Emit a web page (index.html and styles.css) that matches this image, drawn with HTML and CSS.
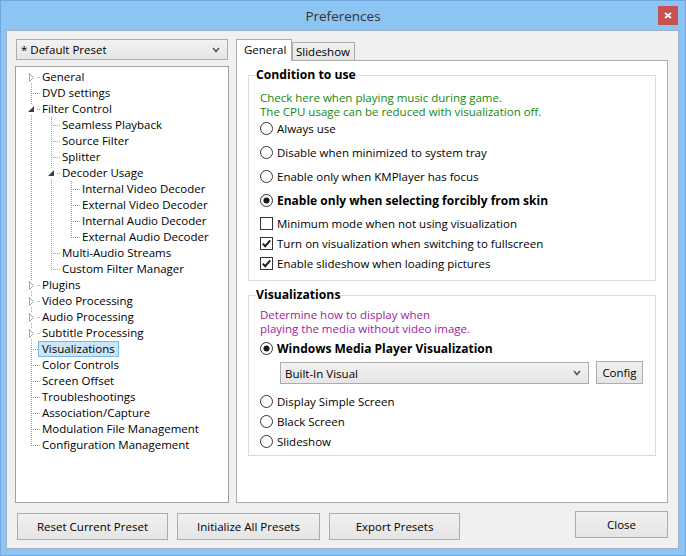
FILE: index.html
```html
<!DOCTYPE html>
<html>
<head>
<meta charset="utf-8">
<title>Preferences</title>
<link rel="stylesheet" href="styles.css">
</head>
<body>
<div class="window">
  <div class="titlebar">
    <span class="title">Preferences</span>
    <div class="close"><svg width="8" height="7" viewBox="0 0 8 7"><path d="M1 1 L7 6 M7 1 L1 6" stroke="#fff" stroke-width="1.7"/></svg></div>
  </div>
  <div class="client">
    <div class="main">
      <div class="left">
        <div class="combo preset"><span>* Default Preset</span><svg class="chev" width="8" height="6" viewBox="0 0 8 6"><polyline points="1,1 4,4.5 7,1" fill="none" stroke="#555" stroke-width="1.6"/></svg></div>
        <div class="tree">
          <div class="row"><span class="g f"><svg width="20" height="16" viewBox="0 0 20 16"><rect x="6" y="3" width="9" height="10" fill="#fff"/><polygon points="8.5,4.5 12.5,8.5 8.5,12.5" fill="#fff" stroke="#a6a6a6"/></svg></span><span class="lbl">General</span></div>
          <div class="row"><span class="g t"></span><span class="lbl">DVD settings</span></div>
          <div class="row"><span class="g t"><svg width="20" height="16" viewBox="0 0 20 16"><rect x="6" y="3" width="9" height="10" fill="#fff"/><polygon points="13,5 13,11 7,11" fill="#404040"/></svg></span><span class="lbl">Filter Control</span></div>
          <div class="row"><span class="g v"></span><span class="g t"></span><span class="lbl">Seamless Playback</span></div>
          <div class="row"><span class="g v"></span><span class="g t"></span><span class="lbl">Source Filter</span></div>
          <div class="row"><span class="g v"></span><span class="g t"></span><span class="lbl">Splitter</span></div>
          <div class="row"><span class="g v"></span><span class="g t"><svg width="20" height="16" viewBox="0 0 20 16"><rect x="6" y="3" width="9" height="10" fill="#fff"/><polygon points="13,5 13,11 7,11" fill="#404040"/></svg></span><span class="lbl">Decoder Usage</span></div>
          <div class="row"><span class="g v"></span><span class="g v"></span><span class="g t"></span><span class="lbl">Internal Video Decoder</span></div>
          <div class="row"><span class="g v"></span><span class="g v"></span><span class="g t"></span><span class="lbl">External Video Decoder</span></div>
          <div class="row"><span class="g v"></span><span class="g v"></span><span class="g t"></span><span class="lbl">Internal Audio Decoder</span></div>
          <div class="row"><span class="g v"></span><span class="g v"></span><span class="g l"></span><span class="lbl">External Audio Decoder</span></div>
          <div class="row"><span class="g v"></span><span class="g t"></span><span class="lbl">Multi-Audio Streams</span></div>
          <div class="row"><span class="g v"></span><span class="g l"></span><span class="lbl">Custom Filter Manager</span></div>
          <div class="row"><span class="g t"><svg width="20" height="16" viewBox="0 0 20 16"><rect x="6" y="3" width="9" height="10" fill="#fff"/><polygon points="8.5,4.5 12.5,8.5 8.5,12.5" fill="#fff" stroke="#a6a6a6"/></svg></span><span class="lbl">Plugins</span></div>
          <div class="row"><span class="g t"><svg width="20" height="16" viewBox="0 0 20 16"><rect x="6" y="3" width="9" height="10" fill="#fff"/><polygon points="8.5,4.5 12.5,8.5 8.5,12.5" fill="#fff" stroke="#a6a6a6"/></svg></span><span class="lbl">Video Processing</span></div>
          <div class="row"><span class="g t"><svg width="20" height="16" viewBox="0 0 20 16"><rect x="6" y="3" width="9" height="10" fill="#fff"/><polygon points="8.5,4.5 12.5,8.5 8.5,12.5" fill="#fff" stroke="#a6a6a6"/></svg></span><span class="lbl">Audio Processing</span></div>
          <div class="row"><span class="g t"><svg width="20" height="16" viewBox="0 0 20 16"><rect x="6" y="3" width="9" height="10" fill="#fff"/><polygon points="8.5,4.5 12.5,8.5 8.5,12.5" fill="#fff" stroke="#a6a6a6"/></svg></span><span class="lbl">Subtitle Processing</span></div>
          <div class="row"><span class="g t"></span><span class="lbl sel">Visualizations</span></div>
          <div class="row"><span class="g t"></span><span class="lbl">Color Controls</span></div>
          <div class="row"><span class="g t"></span><span class="lbl">Screen Offset</span></div>
          <div class="row"><span class="g t"></span><span class="lbl">Troubleshootings</span></div>
          <div class="row"><span class="g t"></span><span class="lbl">Association/Capture</span></div>
          <div class="row"><span class="g t"></span><span class="lbl">Modulation File Management</span></div>
          <div class="row"><span class="g l"></span><span class="lbl">Configuration Management</span></div>
        </div>
      </div>
      <div class="right">
        <div class="tabs">
          <div class="tab sel">General</div>
          <div class="tab">Slideshow</div>
        </div>
        <div class="panel">
          <fieldset class="grp g1">
            <legend>Condition to use</legend>
            <div class="note green">Check here when playing music during game.<br>The CPU usage can be reduced with visualization off.</div>
            <div class="opts">
              <div class="opt r24"><svg class="rb" width="13" height="13" viewBox="0 0 13 13"><circle cx="6.5" cy="6.5" r="6" fill="#fff" stroke="#333"/></svg><span>Always use</span></div>
              <div class="opt r24"><svg class="rb" width="13" height="13" viewBox="0 0 13 13"><circle cx="6.5" cy="6.5" r="6" fill="#fff" stroke="#333"/></svg><span>Disable when minimized to system tray</span></div>
              <div class="opt r24"><svg class="rb" width="13" height="13" viewBox="0 0 13 13"><circle cx="6.5" cy="6.5" r="6" fill="#fff" stroke="#333"/></svg><span>Enable only when KMPlayer has focus</span></div>
              <div class="opt r24"><svg class="rb" width="13" height="13" viewBox="0 0 13 13"><circle cx="6.5" cy="6.5" r="6" fill="#fff" stroke="#333"/><circle cx="6.5" cy="6.5" r="3" fill="#1a1a1a"/></svg><span class="b">Enable only when selecting forcibly from skin</span></div>
            </div>
            <div class="checks">
              <div class="opt r20"><svg class="cb" width="13" height="13" viewBox="0 0 13 13"><rect x="0.5" y="0.5" width="12" height="12" fill="#fff" stroke="#333"/></svg><span>Minimum mode when not using visualization</span></div>
              <div class="opt r20"><svg class="cb" width="13" height="13" viewBox="0 0 13 13"><rect x="0.5" y="0.5" width="12" height="12" fill="#fff" stroke="#333"/><path d="M2.8 6.6 L5.2 9.2 L10.2 3.4" fill="none" stroke="#1a1a1a" stroke-width="1.9"/></svg><span>Turn on visualization when switching to fullscreen</span></div>
              <div class="opt r20"><svg class="cb" width="13" height="13" viewBox="0 0 13 13"><rect x="0.5" y="0.5" width="12" height="12" fill="#fff" stroke="#333"/><path d="M2.8 6.6 L5.2 9.2 L10.2 3.4" fill="none" stroke="#1a1a1a" stroke-width="1.9"/></svg><span>Enable slideshow when loading pictures</span></div>
            </div>
          </fieldset>
          <fieldset class="grp g2">
            <legend>Visualizations</legend>
            <div class="note purple">Determine how to display when<br>playing the media without video image.</div>
            <div class="opt r20 wmp"><svg class="rb" width="13" height="13" viewBox="0 0 13 13"><circle cx="6.5" cy="6.5" r="6" fill="#fff" stroke="#333"/><circle cx="6.5" cy="6.5" r="3" fill="#1a1a1a"/></svg><span class="b">Windows Media Player Visualization</span></div>
            <div class="visrow">
              <div class="combo vis"><span>Built-In Visual</span><svg class="chev" width="8" height="6" viewBox="0 0 8 6"><polyline points="1,1 4,4.5 7,1" fill="none" stroke="#555" stroke-width="1.6"/></svg></div>
              <div class="btn config">Config</div>
            </div>
            <div class="visopts">
              <div class="opt r20"><svg class="rb" width="13" height="13" viewBox="0 0 13 13"><circle cx="6.5" cy="6.5" r="6" fill="#fff" stroke="#333"/></svg><span>Display Simple Screen</span></div>
              <div class="opt r20"><svg class="rb" width="13" height="13" viewBox="0 0 13 13"><circle cx="6.5" cy="6.5" r="6" fill="#fff" stroke="#333"/></svg><span>Black Screen</span></div>
              <div class="opt r20"><svg class="rb" width="13" height="13" viewBox="0 0 13 13"><circle cx="6.5" cy="6.5" r="6" fill="#fff" stroke="#333"/></svg><span>Slideshow</span></div>
            </div>
          </fieldset>
        </div>
      </div>
    </div>
    <div class="buttons">
      <div class="btn reset">Reset Current Preset</div>
      <div class="btn init">Initialize All Presets</div>
      <div class="btn export">Export Presets</div>
      <div class="btn closebtn">Close</div>
    </div>
  </div>
</div>
</body>
</html>
```
FILE: styles.css
```css
* { box-sizing: border-box; }
html, body { margin: 0; padding: 0; }
body {
  font-family: "Open Sans", "Noto Sans", sans-serif;
  font-size: 11.5px;
  color: #000;
  background: #8cc4f4;
  --vd: repeating-linear-gradient(to bottom, #a0a0a0 0 1px, transparent 1px 2px);
  --hd: repeating-linear-gradient(to right, #a0a0a0 0 1px, transparent 1px 2px);
}
.window {
  width: 686px;
  height: 556px;
  border: 1px solid #6ea8dc;
  background: #8cc4f4;
  display: flex;
  flex-direction: column;
}
.titlebar {
  height: 29px;
  flex: none;
  position: relative;
  display: flex;
  align-items: center;
  justify-content: center;
}
.title {
  font-size: 13.5px;
  color: #333;
  line-height: 18px;
  margin-top: 1px;
}
.close {
  position: absolute;
  right: 7px;
  top: 5px;
  width: 20px;
  height: 19px;
  background: #c75050;
  display: flex;
  align-items: center;
  justify-content: center;
}
.close svg { display: block; }
.client {
  flex: 1;
  margin: 0 6px 6px 5px;
  background: #f0f0f0;
  border: 1px solid #9fb3c8;
  padding: 8px 10px 0 8px;
  display: flex;
  flex-direction: column;
}
.main {
  display: flex;
  gap: 7px;
  height: 464px;
  flex: none;
}
.left {
  width: 214px;
  display: flex;
  flex-direction: column;
}
.combo {
  display: flex;
  align-items: center;
  justify-content: space-between;
  border: 1px solid #acacac;
  background: linear-gradient(#f2f2f2, #e5e5e5);
  padding: 0 7px 0 4px;
}
.chev { display: block; }
.preset {
  height: 21px;
  margin: 0 1px;
  flex: none;
}
.tree {
  flex: 1;
  margin-top: 6px;
  background: #fff;
  border: 1px solid #a0a0a0;
  padding: 2px 0 0 5px;
}
.row {
  display: flex;
  height: 16px;
  align-items: center;
}
.g {
  width: 20px;
  height: 16px;
  flex: none;
  background-repeat: no-repeat;
}
.g svg { display: block; }
.g.v {
  background-image: var(--vd);
  background-size: 1px 16px;
  background-position: 10px 0;
}
.g.t {
  background-image: var(--vd), var(--hd);
  background-size: 1px 16px, 10px 1px;
  background-position: 10px 0, 10px 8px;
}
.g.l {
  background-image: var(--vd), var(--hd);
  background-size: 1px 9px, 10px 1px;
  background-position: 10px 0, 10px 8px;
}
.g.f {
  background-image: var(--vd), var(--hd);
  background-size: 1px 8px, 10px 1px;
  background-position: 10px 8px, 10px 8px;
}
.lbl {
  margin-left: -3px;
  padding: 0 3px;
  border: 1px solid transparent;
  line-height: 14px;
  white-space: nowrap;
}
.lbl.sel {
  background: #cde6f7;
  border-color: #7db7e8;
}
.right {
  width: 432px;
  display: flex;
  flex-direction: column;
}
.tabs {
  display: flex;
  align-items: flex-end;
  height: 21px;
  flex: none;
  position: relative;
  z-index: 1;
}
.tab {
  height: 18px;
  width: 63px;
  border: 1px solid #acacac;
  border-bottom: none;
  background: linear-gradient(#f0f0f0, #e6e6e6);
  padding-left: 3px;
  line-height: 17px;
}
.tab.sel {
  height: 22px;
  width: 56px;
  margin-bottom: -1px;
  background: #fff;
  padding-left: 7px;
  line-height: 20px;
}
.panel {
  flex: 1;
  background: #fff;
  border: 1px solid #acacac;
  padding: 6px 11px 0 11px;
}
.grp {
  margin: 0;
  border: 1px solid #dcdcdc;
  padding: 0 10px 6px 11px;
  min-width: 0;
}
.g1 { padding-bottom: 7px; }
.grp legend {
  padding: 0;
  margin-left: -4px;
  font-weight: bold;
  font-size: 12.2px;
  line-height: 16px;
}
.g2 {
  margin-top: 6px;
  padding-bottom: 4px;
}
.note {
  line-height: 14px;
  margin-top: 8px;
}
.green { color: #118a11; }
.purple { color: #9c1c9c; margin-top: 5px; }
.opts { margin-top: -3px; }
.checks { margin-top: 1px; }
.opt {
  display: flex;
  align-items: center;
  white-space: nowrap;
}
.opt svg { display: block; flex: none; margin-right: 4px; }
.r24 { height: 24px; }
.r20 { height: 20px; }
.b { font-weight: bold; font-size: 12px; }
.wmp { margin-top: 2px; }
.visrow {
  display: flex;
  margin: 3px 0 0 20px;
  gap: 7px;
}
.vis {
  width: 309px;
  height: 22px;
  margin-top: 1px;
}
.btn {
  border: 1px solid #acacac;
  background: linear-gradient(#f0f0f0, #e5e5e5);
  display: flex;
  align-items: center;
  justify-content: center;
  white-space: nowrap;
}
.config {
  width: 47px;
  height: 23px;
}
.visopts { margin-top: 7px; }
.buttons {
  display: flex;
  margin-top: 10px;
}
.buttons .btn { height: 27px; }
.reset { width: 151px; margin-left: 2px; }
.init { width: 143px; margin-left: 9px; }
.export { width: 131px; margin-left: 9px; }
.closebtn { width: 93px; margin-left: auto; margin-top: -2px; }
```
